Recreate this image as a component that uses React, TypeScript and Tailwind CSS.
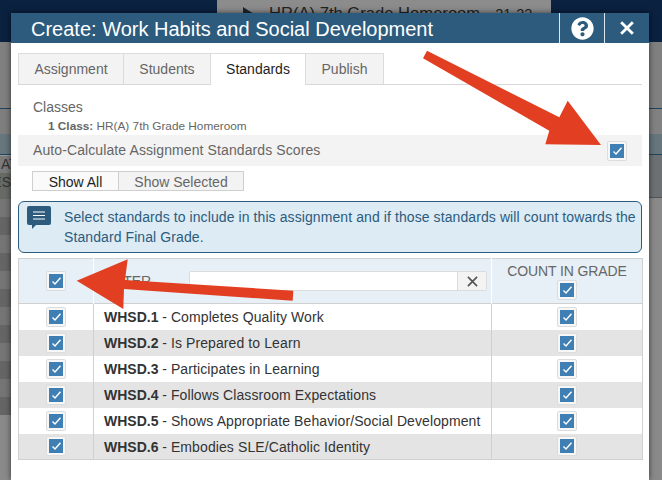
import { FaQuestionCircle } from "react-icons/fa";

function Check() {
  return (
    <span className="flex h-5 w-5 items-center justify-center rounded-[2px] border border-[#dcdcdc] bg-[#f7f7f7]">
      <span className="flex h-[14px] w-[14px] items-center justify-center bg-[#3f7fb3]">
        <svg width="11" height="10" viewBox="0 0 11 10" fill="none">
          <path d="M1.5 5.5 L4 8 L9.5 1.8" stroke="#fff" strokeWidth="1.4" />
        </svg>
      </span>
    </span>
  );
}

function Cross({ size, weight }: { size: number; weight: number }) {
  return (
    <svg width={size} height={size} viewBox="0 0 12 12" fill="none">
      <path d="M1 1 L11 11 M11 1 L1 11" stroke="currentColor" strokeWidth={weight} />
    </svg>
  );
}

const rows = [
  ["WHSD.1", "Completes Quality Work"],
  ["WHSD.2", "Is Prepared to Learn"],
  ["WHSD.3", "Participates in Learning"],
  ["WHSD.4", "Follows Classroom Expectations"],
  ["WHSD.5", "Shows Appropriate Behavior/Social Development"],
  ["WHSD.6", "Embodies SLE/Catholic Identity"],
];

const stripes = Array.from({ length: 12 });

function Background() {
  return (
    <div className="flex h-[480px] w-[662px] flex-col bg-[#8a8a8a]">
      <div className="flex h-[42px] shrink-0">
        <div className="w-[217px] bg-[#0a2140]" />
        <div className="flex flex-1 items-start gap-[15px] overflow-hidden bg-[#8c8c8c] pl-[26px] pt-[4px] text-[16.6px] text-[#222]">
          <svg width="11" height="14" viewBox="0 0 11 14" className="mt-[3px] shrink-0">
            <path d="M0 0 L11 7 L0 14 Z" fill="#1b2530" />
          </svg>
          <span className="whitespace-nowrap leading-[20px]">HR(A) 7th Grade Homeroom</span>
          <span className="whitespace-nowrap text-[14.5px] leading-[20px]">21-22</span>
        </div>
        <div className="w-[111px] bg-[#0a2140]" />
      </div>
      <div className="flex flex-1 justify-between">
        <div className="flex w-[11px] flex-col overflow-hidden text-[14px] leading-[16px] text-[#333]">
          <div className="h-[67px] shrink-0 border-b border-[#1f4560] bg-[#808080]" />
          <div className="h-[25px] shrink-0 bg-[#7e7e7e]" />
          <div className="h-[21px] shrink-0 border-b border-[#1f4560] bg-[#66767c]" />
          <div className="h-[18px] shrink-0 border-t border-[#999] bg-[#7c7c7c] pl-[1px]">AT</div>
          <div className="h-[26px] shrink-0 whitespace-nowrap bg-[#686a66] pt-[1px] [direction:rtl]">ES</div>
          {stripes.map((_, i) => (
            <div key={i} className={`h-[18px] shrink-0 ${i % 2 === 0 ? "bg-[#757575]" : "bg-[#656565]"}`} />
          ))}
        </div>
        <div className="flex w-[13px] flex-col">
          <div className="h-[67px] shrink-0 border-b border-[#1f4560] bg-[#808080]" />
          <div className="h-[25px] shrink-0 bg-[#828282]" />
          <div className="h-[21px] shrink-0 border-b border-[#1f4560] bg-[#66767c]" />
          <div className="h-[43px] shrink-0 border-b border-[#555] bg-[#6d7173]" />
          <div className="flex-1 bg-[#8a8a8a]" />
        </div>
      </div>
    </div>
  );
}

export default function App() {
  return (
    <div className="relative h-[480px] w-[662px] overflow-hidden font-['Liberation_Sans',Arial,sans-serif]">
      <Background />

      <div className="absolute left-[11px] top-[13px] h-[467px] w-[638px] bg-white shadow-[0_0_6px_rgba(0,0,0,0.6)]">
        <div className="flex h-[30px] items-stretch bg-[#2c5b7e] text-white">
          <div className="flex-1 pl-5 text-[20px] leading-[33px]">Create: Work Habits and Social Development</div>
          <div className="flex w-[45px] items-center justify-center border-l border-[#dfe7ee] text-[23px]">
            <FaQuestionCircle />
          </div>
          <div className="flex w-[45px] items-center justify-center border-l border-[#dfe7ee]">
            <Cross size={14} weight={2.4} />
          </div>
        </div>

        <div className="px-[7px] pt-[10px]">
          <div className="flex h-[32px] border-b border-[#d8d8d8] text-[14px] leading-[30px] text-[#666]">
            <div className="h-[31px] w-[106px] border-x border-t border-[#dcdcdc] bg-[#f3f3f3] text-center">Assignment</div>
            <div className="h-[31px] w-[87px] border-r border-t border-[#dcdcdc] bg-[#f3f3f3] text-center">Students</div>
            <div className="h-[32px] w-[95px] border-r border-t border-[#dcdcdc] bg-white text-center text-[#1e1e1e]">Standards</div>
            <div className="h-[31px] w-[78px] border-r border-t border-[#dcdcdc] bg-[#f3f3f3] text-center">Publish</div>
          </div>

          <div className="pl-[15px] pt-[14px] text-[14px] leading-[16px] text-[#666]">Classes</div>
          <div className="pl-[30px] pt-[3px] text-[11.8px] leading-[16px] text-[#666]">
            <b>1 Class:</b> HR(A) 7th Grade Homeroom
          </div>

          <div className="mt-[1px] flex h-[31px] items-center justify-between bg-[#f3f3f3] px-[15px] text-[14px] tracking-[0.1px] text-[#666]">
            <span>Auto-Calculate Assignment Standards Scores</span>
            <span className="mt-[1px]"><Check /></span>
          </div>

          <div className="ml-[14px] mt-[5px] flex h-[20px] w-[212px] border border-[#cfcfcf] text-[14px] leading-[20px]">
            <div className="w-[86px] border-r border-[#cfcfcf] bg-[#fafafa] text-center text-[#1e1e1e]">Show All</div>
            <div className="flex-1 bg-[#f3f3f3] text-center text-[#666]">Show Selected</div>
          </div>

          <div className="mt-[10px] flex h-[52px] rounded-[6px] border border-[#2c5b7e] bg-[#dcebf4] pl-[8px] pt-[4px]">
            <svg width="24" height="24" viewBox="0 0 24 24" className="shrink-0">
              <path d="M2 0 H22 A2 2 0 0 1 24 2 V17 A2 2 0 0 1 22 19 H9 L5 23 V19 H2 A2 2 0 0 1 0 17 V2 A2 2 0 0 1 2 0 Z" fill="#2c5b7e" />
              <path d="M6 6 H18 M6 9.5 H18 M6 13 H18" stroke="#fff" strokeWidth="1" />
            </svg>
            <p className="ml-[13px] pt-[1px] text-[14px] leading-[20px] tracking-[0.09px] text-[#2c5b7e]">
              Select standards to include in this assignment and if those standards will count towards the Standard Final Grade.
            </p>
          </div>

          <table className="mt-[5px] w-[624px] table-fixed border-collapse border border-[#d0d0d0] text-[14px] text-[#333]">
            <colgroup>
              <col className="w-[75px]" />
              <col className="w-[398px]" />
              <col className="w-[151px]" />
            </colgroup>
            <thead>
              <tr className="h-[45px] bg-[#e6f0f6]">
                <th className="border-r border-[#fff] font-normal">
                  <span className="flex justify-center"><Check /></span>
                </th>
                <th className="border-r border-[#fff] pl-[10px] font-normal">
                  <div className="flex items-center text-[#666]">
                    <span className="w-[85px] text-left">FILTER</span>
                    <div className="flex h-[20px] w-[298px] rounded-[2px] border border-[#dcdcdc]">
                      <div className="flex-1 bg-white" />
                      <div className="flex w-[29px] items-center justify-center border-l border-[#dcdcdc] bg-[#f3f3f3] text-[#555]">
                        <Cross size={11} weight={1.8} />
                      </div>
                    </div>
                  </div>
                </th>
                <th className="font-normal tracking-[-0.1px] text-[#666]">
                  <div className="leading-[16px]">COUNT IN GRADE</div>
                  <span className="mt-[1px] flex justify-center"><Check /></span>
                </th>
              </tr>
            </thead>
            <tbody>
              {rows.map(([code, name], i) => (
                <tr key={code} className={`h-[26px] ${i % 2 === 1 ? "bg-[#e4e4e4]" : "bg-white"} ${i === 0 ? "border-t border-[#d0d0d0]" : ""}`}>
                  <td className="border-r border-[#d0d0d0]">
                    <span className="flex justify-center"><Check /></span>
                  </td>
                  <td className="border-r border-[#d0d0d0] pl-[10px] pt-[2px]">
                    <b>{code}</b> - <span className="tracking-[0.1px]">{name}</span>
                  </td>
                  <td>
                    <span className="flex justify-center"><Check /></span>
                  </td>
                </tr>
              ))}
            </tbody>
          </table>
        </div>
      </div>

      <svg className="pointer-events-none absolute left-0 top-0" width="662" height="480" viewBox="0 0 662 480">
        <path d="M427 50.7 L423 58.3 L549.3 130.7 L545.3 144.3 L601 145 L567.7 100.7 L559.3 117.3 Z" fill="#e23f22" />
        <path d="M76.7 280.7 L127.7 259.3 L125 280 L293.3 290.7 L292.7 300.7 L124 289 L123.3 309 Z" fill="#e23f22" />
      </svg>
    </div>
  );
}
